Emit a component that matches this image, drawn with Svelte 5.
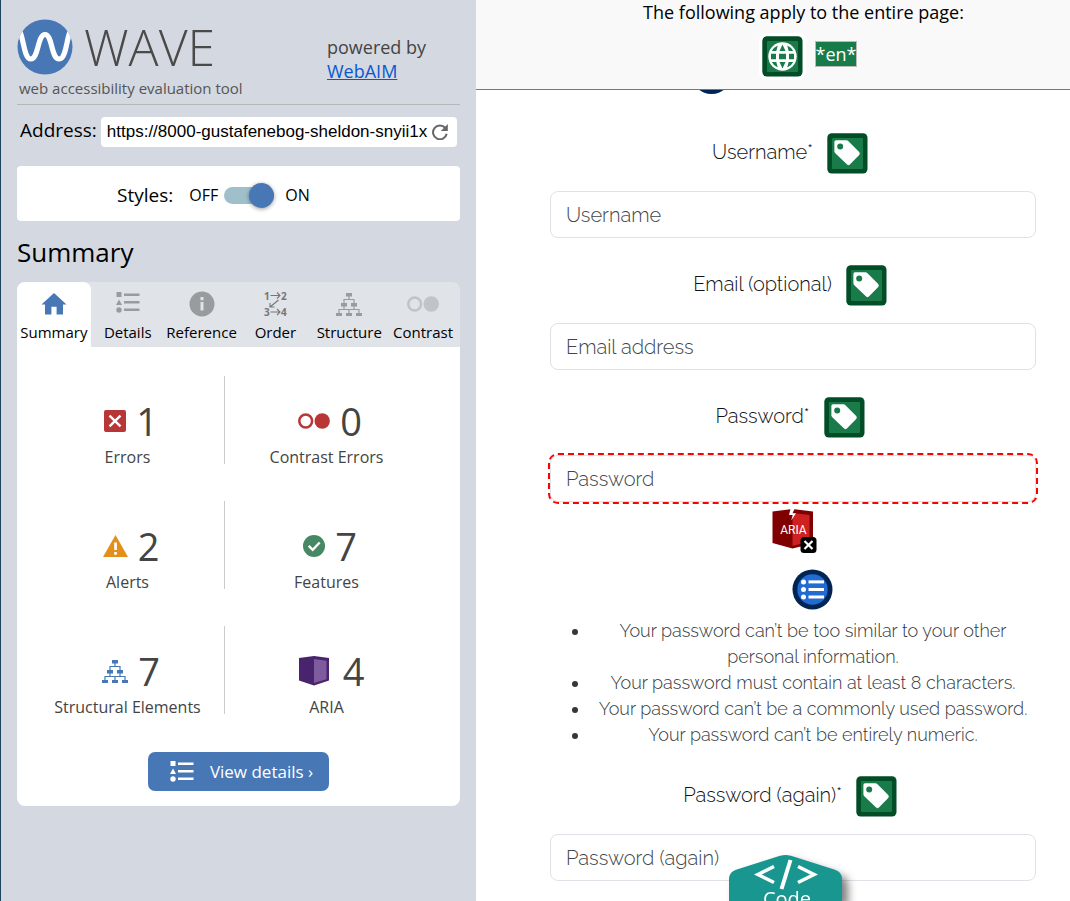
<script>
  let address = $state('https://8000-gustafenebog-sheldon-snyii1x');
  let stylesOn = $state(true);
  let active = $state('Summary');

  const tabs = ['Summary', 'Details', 'Reference', 'Order', 'Structure', 'Contrast'];

  const stats = [
    { icon: 'error', count: 1, label: 'Errors' },
    { icon: 'contrast', count: 0, label: 'Contrast Errors' },
    { icon: 'alert', count: 2, label: 'Alerts' },
    { icon: 'feature', count: 7, label: 'Features' },
    { icon: 'structure', count: 7, label: 'Structural Elements' },
    { icon: 'aria', count: 4, label: 'ARIA' },
  ];

  const hints = [
    'Your password can’t be too similar to your other personal information.',
    'Your password must contain at least 8 characters.',
    'Your password can’t be a commonly used password.',
    'Your password can’t be entirely numeric.',
  ];
</script>

{#snippet tree()}
  <svg width="26" height="23" viewBox="0 0 26 23" fill="currentColor" aria-hidden="true">
    <rect x="10" y="0" width="6" height="3.5" />
    <rect x="5" y="10" width="6" height="3.5" />
    <rect x="15" y="10" width="6" height="3.5" />
    <rect x="0" y="20" width="6" height="3" />
    <rect x="10" y="20" width="6" height="3" />
    <rect x="20" y="20" width="6" height="3" />
    <path d="M13 3v3.5M8 10V6.5h10V10M8 13v3.5M18 13v3.5M3 20v-3.5h20V20M13 16.500V20" fill="none" stroke="currentColor" stroke-width="1.200" />
  </svg>
{/snippet}

{#snippet bullets()}
  <svg width="24" height="21" viewBox="0 0 24 21" fill="currentColor" aria-hidden="true">
    <rect x="0.500" y="0" width="5" height="5" />
    <path d="M3 7.500L6 13H0z" />
    <circle cx="3" cy="18" r="2.700" />
    <rect x="8" y="1.500" width="15.500" height="2.500" />
    <rect x="8" y="9" width="15.500" height="2.500" />
    <rect x="8" y="16.500" width="15.500" height="2.500" />
  </svg>
{/snippet}

{#snippet rings()}
  <svg width="32" height="16" viewBox="0 0 32 16" aria-hidden="true">
    <circle cx="7.700" cy="8" r="6.400" fill="none" stroke="currentColor" stroke-width="2.500" />
    <circle cx="24.200" cy="8" r="7.700" fill="currentColor" />
  </svg>
{/snippet}

{#snippet tag()}
  <svg class="tag" width="41" height="41" viewBox="0 0 41 41" role="img" aria-label="Form label">
    <rect x="0.300" y="0.300" width="40.200" height="40.200" rx="4.500" fill="#004d26" />
    <rect x="5" y="5" width="31" height="31" rx="1" fill="#187b49" />
    <path d="M9 7.300h10.500q1 0 1.700.700l11 11q1.300 1.500 0 2.900l-9.300 9.700q-1.400 1.300-2.800 0L8.300 20.200q-.900-.900-.900-2V9q0-1.700 1.600-1.700z" fill="#fff" />
    <circle cx="13.200" cy="13.600" r="3" fill="#187b49" />
  </svg>
{/snippet}

<div class="shell">
  <aside>
    <header class="brand">
      <div>
        <div class="logo">
          <svg width="56" height="56" viewBox="0 0 56 56" aria-hidden="true">
            <defs><clipPath id="disc"><circle cx="28" cy="28" r="27.500" /></clipPath></defs>
            <circle cx="28" cy="28" r="27.500" fill="#4877b6" />
            <path clip-path="url(#disc)" d="M0 9C7 13 6 40 13.800 40S20.500 15.500 28 15.500S34 40 42.200 40S49 13 56 9" fill="none" stroke="#fff" stroke-width="5.200" />
          </svg>
          <span class="name">WAVE</span>
        </div>
        <p class="tagline">web accessibility evaluation tool</p>
      </div>
      <p class="powered">powered by<br /><a href="#webaim">WebAIM</a></p>
    </header>

    <form class="address" onsubmit={(e) => e.preventDefault()}>
      <label for="address">Address:</label>
      <div class="urlbox">
        <input id="address" type="text" bind:value={address} />
        <button type="submit" aria-label="Reload">
          <svg width="16" height="16" viewBox="0 0 16 16" aria-hidden="true">
            <path d="M13.300 4A6.900 6.900 0 1 0 14.700 9.800" fill="none" stroke="#666" stroke-width="2" />
            <path d="M15.800 0v7H8.800z" fill="#666" />
          </svg>
        </button>
      </div>
    </form>

    <section class="styles">
      <span class="styles-title" id="styles-title">Styles:</span>
      <label class="switch">
        <span>OFF</span>
        <input type="checkbox" bind:checked={stylesOn} aria-labelledby="styles-title" />
        <span class="track"><span class="thumb"></span></span>
        <span>ON</span>
      </label>
    </section>

    <h1>Summary</h1>

    <nav class="tabs">
      {#each tabs as tab}
        <button type="button" class:active={active === tab} onclick={() => (active = tab)}>
          <span class="tab-icon">
            {#if tab === 'Summary'}
              <svg width="26" height="22" viewBox="0 0 26 22" fill="currentColor" aria-hidden="true">
                <path d="M13 0L25.500 11.500H22V21.500H15.600V13.800H10.400V21.500H4V11.500H.500z" />
              </svg>
            {:else if tab === 'Details'}
              <span class="raised">{@render bullets()}</span>
            {:else if tab === 'Reference'}
              <svg width="26" height="26" viewBox="0 0 26 26" aria-hidden="true">
                <circle cx="13" cy="13" r="12.500" fill="currentColor" />
                <rect x="11.500" y="6" width="3" height="3.200" fill="#e0e3e8" />
                <rect x="11.500" y="11" width="3" height="8.500" fill="#e0e3e8" />
              </svg>
            {:else if tab === 'Order'}
              <svg class="order" width="26" height="28" viewBox="-1 -1 26 28" aria-hidden="true">
                <text x="1" y="8.500">1</text>
                <text x="18" y="8.500">2</text>
                <text x="1" y="25">3</text>
                <text x="18" y="25">4</text>
                <path d="M7.500 4.500H17M14 1.500l3 3-3 3M7.500 21H17M14 18l3 3-3 3M15.500 9L7 16M7 12v4h4.500" fill="none" stroke="#777" stroke-width="1.100" />
              </svg>
            {:else if tab === 'Structure'}
              {@render tree()}
            {:else}
              <span class="faint">{@render rings()}</span>
            {/if}
          </span>
          {tab}
        </button>
      {/each}
    </nav>

    <section class="panel">
      <div class="stats">
        {#each stats as s}
          <div class="stat">
            <div class="figure {s.icon}">
              {#if s.icon === 'error'}
                <svg width="22" height="22" viewBox="0 0 22 22" aria-hidden="true">
                  <rect width="22" height="22" rx="2" fill="currentColor" />
                  <path d="M5.500 5.700l11 10.600M16.500 5.700l-11 10.600" stroke="#fff" stroke-width="2.400" />
                </svg>
              {:else if s.icon === 'contrast'}
                {@render rings()}
              {:else if s.icon === 'alert'}
                <svg width="25" height="22" viewBox="0 0 25 22" aria-hidden="true">
                  <path d="M12.500 0L25 22H0z" fill="currentColor" />
                  <rect x="11.200" y="7.500" width="2.700" height="7.500" fill="#fff" />
                  <rect x="11.200" y="17" width="2.700" height="2.700" fill="#fff" />
                </svg>
              {:else if s.icon === 'feature'}
                <svg width="22" height="22" viewBox="0 0 22 22" aria-hidden="true">
                  <circle cx="11" cy="11" r="11" fill="currentColor" />
                  <path d="M5.700 10.800l4 4 7-7.300" fill="none" stroke="#fff" stroke-width="2.400" />
                </svg>
              {:else if s.icon === 'structure'}
                {@render tree()}
              {:else}
                <svg width="37" height="30" viewBox="-3 0 37 30" aria-hidden="true">
                  <path d="M0 2L15 0l15 2v22.500L15 29.500 0 24.500z" fill="#49246e" />
                  <path d="M15 3l12.500 1.800v18.400L15 27z" fill="#7d5b9c" />
                </svg>
              {/if}
              <span>{s.count}</span>
            </div>
            <div class="label">{s.label}</div>
          </div>
        {/each}
      </div>
      <button type="button" class="details">{@render bullets()}<span>View details ›</span></button>
    </section>
  </aside>

  <main>
    <header class="banner">
      <p>The following apply to the entire page:</p>
      <div class="marks">
        <svg class="globe" width="41" height="41" viewBox="0 0 41 41" role="img" aria-label="Language">
          <rect x="0.300" y="0.300" width="40.200" height="40.200" rx="4.500" fill="#004d26" />
          <rect x="5" y="5" width="31" height="31" rx="1" fill="#187b49" />
          <circle cx="20.500" cy="20.500" r="14.200" fill="#fff" />
          <path d="M17 17.800h7v5.400h-7zM9 17.800h5v5.400H9zM27 17.800h5v5.400h-5zM17.500 15l3-6.500 3 6.500zM17.500 26l3 6.500 3-6.500zM9.800 15q1.700-3.700 6-5.600L14.300 15zM31.200 15q-1.700-3.700-6-5.600l1.500 5.600zM9.800 26q1.700 3.700 6 5.600L14.300 26zM31.200 26q-1.700 3.700-6 5.600l1.500-5.600z" fill="#187b49" />
        </svg>
        <span class="lang">*en*</span>
      </div>
    </header>
    <div class="peek"><i></i></div>

    <form class="signup" onsubmit={(e) => e.preventDefault()}>
      <div class="row"><label for="username">Username<sup>*</sup></label>{@render tag()}</div>
      <input id="username" type="text" placeholder="Username" />

      <div class="row"><label for="email">Email (optional)</label>{@render tag()}</div>
      <input id="email" type="email" placeholder="Email address" />

      <div class="row"><label for="password">Password<sup>*</sup></label>{@render tag()}</div>
      <input id="password" class="flagged" type="password" placeholder="Password" />

      <svg class="aria-mark" width="46" height="45" viewBox="0 0 46 45" role="img" aria-label="Broken ARIA reference">
        <path d="M0.500 2.500L20.500 0l20.500 2.500v32L20.500 39.500.500 34z" fill="#800000" />
        <path d="M20.500 4L37.500 6v26.500L20.500 37z" fill="#cd2122" />
        <path d="M18.500 0L17 6h3.800L19.200 11.500 24 4.300h-3.500L22.500 0z" fill="#fff" />
        <text x="21.500" y="24.500" text-anchor="middle">ARIA</text>
        <rect x="28.500" y="28" width="16" height="16" rx="3.500" fill="#000" />
        <path d="M32.500 32l8 8M40.500 32l-8 8" stroke="#fff" stroke-width="2.200" />
      </svg>
      <svg class="list-mark" width="41" height="41" viewBox="0 0 41 41" role="img" aria-label="Unordered list">
        <circle cx="20.500" cy="20.500" r="20" fill="#002554" />
        <circle cx="20.500" cy="20.500" r="15.200" fill="#236bd0" />
        <g fill="#fff">
          <circle cx="11.500" cy="12.900" r="2.500" /><circle cx="11.500" cy="20.500" r="2.500" /><circle cx="11.500" cy="28" r="2.500" />
          <rect x="16.500" y="11.400" width="15.500" height="3" /><rect x="16.500" y="19" width="15.500" height="3" /><rect x="16.500" y="26.500" width="15.500" height="3" />
        </g>
      </svg>
      <ul>
        {#each hints as hint}<li>{hint}</li>{/each}
      </ul>

      <div class="row"><label for="again">Password (again)<sup>*</sup></label>{@render tag()}</div>
      <input id="again" type="password" placeholder="Password (again)" />
    </form>

    <button type="button" class="code" aria-label="Code">
      <svg width="113" height="47" viewBox="0 0 113 47" aria-hidden="true">
        <path d="M0 47V25q0-7 7-9.300L51 1.800q5.500-1.800 11 0L106 15.700q7 2.300 7 9.300V47z" fill="#18968f" />
        <path d="M45 12.500L29 20.500 45 28.500M69 12.500l16 8L69 28.500" fill="none" stroke="#fff" stroke-width="3.600" />
        <path d="M61.500 6L52.500 35" stroke="#fff" stroke-width="4" />
        <text x="58" y="52" text-anchor="middle">Code</text>
      </svg>
    </button>
  </main>
</div>

<style>
  :global(body) {
    margin: 0;
    background: #fff;
  }
  .shell {
    display: grid;
    grid-template-columns: 476px minmax(0, 1fr);
    min-height: 100vh;
    font-family: 'Open Sans', 'Noto Sans', sans-serif;
    color: #000;
  }
  p,
  h1 {
    margin: 0;
    font-weight: 400;
  }
  svg {
    display: block;
    flex: none;
  }
  button {
    border: 0;
    padding: 0;
    background: none;
    font: inherit;
    color: inherit;
    cursor: pointer;
  }

  aside {
    box-sizing: border-box;
    padding: 19px 16px 0;
    background: #d4d8e0;
    border-left: 1px solid #1d4560;
  }
  .brand {
    display: grid;
    grid-template-columns: 310px 1fr;
    height: 85px;
    border-bottom: 1px solid #b4b8b9;
  }
  .logo {
    display: flex;
    align-items: center;
    gap: 11px;
    height: 56px;
  }
  .name {
    font-size: 50px;
    font-weight: 300;
    line-height: 56px;
    color: #4a4a4a;
  }
  .tagline {
    padding-left: 2px;
    font-size: 15px;
    line-height: 26px;
    color: #555;
  }
  .powered {
    padding-top: 16px;
    font-size: 18px;
    line-height: 24px;
    color: #444;
  }
  .powered a {
    color: #0b57d0;
  }

  .address {
    display: flex;
    align-items: center;
    gap: 4px;
    padding: 12px 3px 0;
  }
  .address label {
    font-size: 19px;
    line-height: 26px;
    padding-bottom: 4px;
  }
  .urlbox {
    display: flex;
    align-items: center;
    flex: 1;
    min-width: 0;
    height: 30px;
    padding: 0 9px 0 6px;
    border-radius: 4px;
    background: #fff;
    box-sizing: border-box;
  }
  .urlbox input {
    flex: 1;
    min-width: 0;
    border: 0;
    padding: 0;
    outline: 0;
    background: none;
    font: 17px 'Liberation Sans', Arial, sans-serif;
  }

  .styles {
    display: flex;
    align-items: center;
    gap: 16px;
    height: 55px;
    margin-top: 19px;
    padding: 2px 100px 0;
    box-sizing: border-box;
    border-radius: 4px;
    background: #fff;
  }
  .styles-title {
    font-size: 19px;
  }
  .switch {
    display: flex;
    align-items: center;
    position: relative;
    gap: 6px;
    font-size: 16px;
  }
  .switch input {
    position: absolute;
    opacity: 0;
  }
  .track {
    display: flex;
    align-items: center;
    width: 50px;
    height: 17px;
    margin: 1px 5px 0 0;
    border-radius: 9px;
    background: #9fc0cb;
  }
  .thumb {
    width: 25px;
    height: 25px;
    border-radius: 50%;
    background: #999;
    box-shadow: 0 1px 4px rgb(0 0 0 / 40%);
  }
  input:checked + .track .thumb {
    margin-left: auto;
    background: #4877b6;
  }

  h1 {
    margin: 13px 0 12px;
    font-size: 26px;
    line-height: 36px;
  }

  .tabs {
    display: grid;
    grid-template-columns: repeat(6, minmax(0, 1fr));
    height: 65px;
    border-radius: 8px 8px 0 0;
    background: #e0e3e8;
  }
  .tabs button {
    display: flex;
    flex-direction: column;
    align-items: center;
    padding-top: 7px;
    border-radius: 8px 8px 0 0;
    font-size: 15px;
    line-height: 20px;
    white-space: nowrap;
  }
  .tabs .active {
    background: #fff;
  }
  .tab-icon {
    display: flex;
    align-items: center;
    height: 30px;
    margin-bottom: 3px;
    color: #999c9f;
  }
  .active .tab-icon {
    color: #4877b6;
  }
  .raised {
    padding-bottom: 4px;
  }
  .faint {
    color: #c0c3c7;
  }
  .order {
    overflow: visible;
  }
  .order text {
    font: 700 10px 'Open Sans', sans-serif;
    fill: #777;
  }

  .panel {
    display: flex;
    flex-direction: column;
    align-items: center;
    padding: 29px 0 15px;
    border-radius: 0 0 8px 8px;
    background: #fff;
  }
  .stats {
    display: grid;
    grid-template-columns: 194fr 203fr;
    row-gap: 37px;
    align-self: stretch;
    padding: 0 32px 0 14px;
    color: #444;
  }
  .stat {
    box-sizing: border-box;
    height: 88px;
    padding-top: 20px;
    text-align: center;
  }
  .stat:nth-child(odd) {
    border-right: 1px solid #ccc;
  }
  .figure {
    display: flex;
    align-items: center;
    justify-content: center;
    gap: 10px;
    padding-left: 7px;
    font-size: 38px;
    line-height: 50px;
  }
  .figure span {
    color: #444;
  }
  .label {
    font-size: 16px;
    line-height: 22px;
  }
  .error,
  .contrast {
    color: #b93636;
  }
  .alert {
    color: #e48f1a;
  }
  .feature {
    color: #468764;
  }
  .structure {
    color: #4877b6;
  }
  .details {
    display: flex;
    align-items: center;
    gap: 16px;
    height: 39px;
    margin-top: 38px;
    padding: 0 16px 0 22px;
    border-radius: 7px;
    background: #4877b6;
    color: #fff;
    font-size: 17px;
  }

  main {
    position: relative;
    font-family: Raleway, Lato, sans-serif;
  }
  .banner {
    height: 89px;
    padding-left: 61px;
    border-bottom: 1px solid #777;
    background: #f9f9f9;
    font-family: 'Open Sans', sans-serif;
    font-size: 18px;
    text-align: center;
  }
  .banner p {
    line-height: 24px;
  }
  .marks {
    display: flex;
    justify-content: center;
    align-items: center;
    gap: 12px;
    padding: 12px 0 0 12px;
  }
  .globe {
    border-radius: 5px;
    box-shadow: 0 0 0 3px #fff;
  }
  .lang {
    margin-bottom: 5px;
    border: 1px solid #bbb;
    background: #187b49;
    color: #fff;
    line-height: 24px;
  }
  .peek {
    display: flex;
    justify-content: center;
    align-items: flex-end;
    height: 4px;
    margin-right: 123px;
    overflow: hidden;
  }
  .peek i {
    flex: none;
    width: 41px;
    height: 41px;
    border-radius: 50%;
    background: #002554;
  }

  .signup {
    padding: 12px 34px 20px 74px;
    color: #212529;
  }
  .row {
    display: flex;
    justify-content: center;
    align-items: center;
    gap: 14px;
    padding: 27px 6px 17px 0;
    font-size: 20px;
    font-weight: 300;
    line-height: 41px;
    color: #0f1215;
  }
  .row label {
    margin-top: -2px;
  }
  sup {
    font-size: 18px;
    line-height: 0;
    vertical-align: 2px;
  }
  .signup input {
    display: block;
    box-sizing: border-box;
    width: 100%;
    height: 47px;
    padding: 0 15px;
    border: 1px solid #dee2e6;
    border-radius: 8px;
    background: #fff;
    font: 300 20px Raleway, Lato, sans-serif;
    color: #212529;
  }
  .signup input::placeholder {
    color: #40464b;
    opacity: 1;
  }
  .signup .flagged {
    outline: 2px dashed #f00;
  }
  .aria-mark {
    margin: 7px auto 0 222px;
  }
  .aria-mark text {
    font: 12px Roboto, sans-serif;
    fill: #fff;
  }
  .list-mark {
    margin: 15px auto 8px 242px;
  }
  ul {
    margin: 0 0 1px;
    padding-left: 40px;
    font-size: 18px;
    font-weight: 300;
    line-height: 26px;
    text-align: center;
    color: #33383c;
  }

  .code {
    position: fixed;
    bottom: 0;
    left: 729px;
    filter: drop-shadow(6px 6px 4px rgb(0 0 0 / 50%));
  }
  .code text {
    font: 20px 'Open Sans', sans-serif;
    fill: #fff;
  }
</style>
